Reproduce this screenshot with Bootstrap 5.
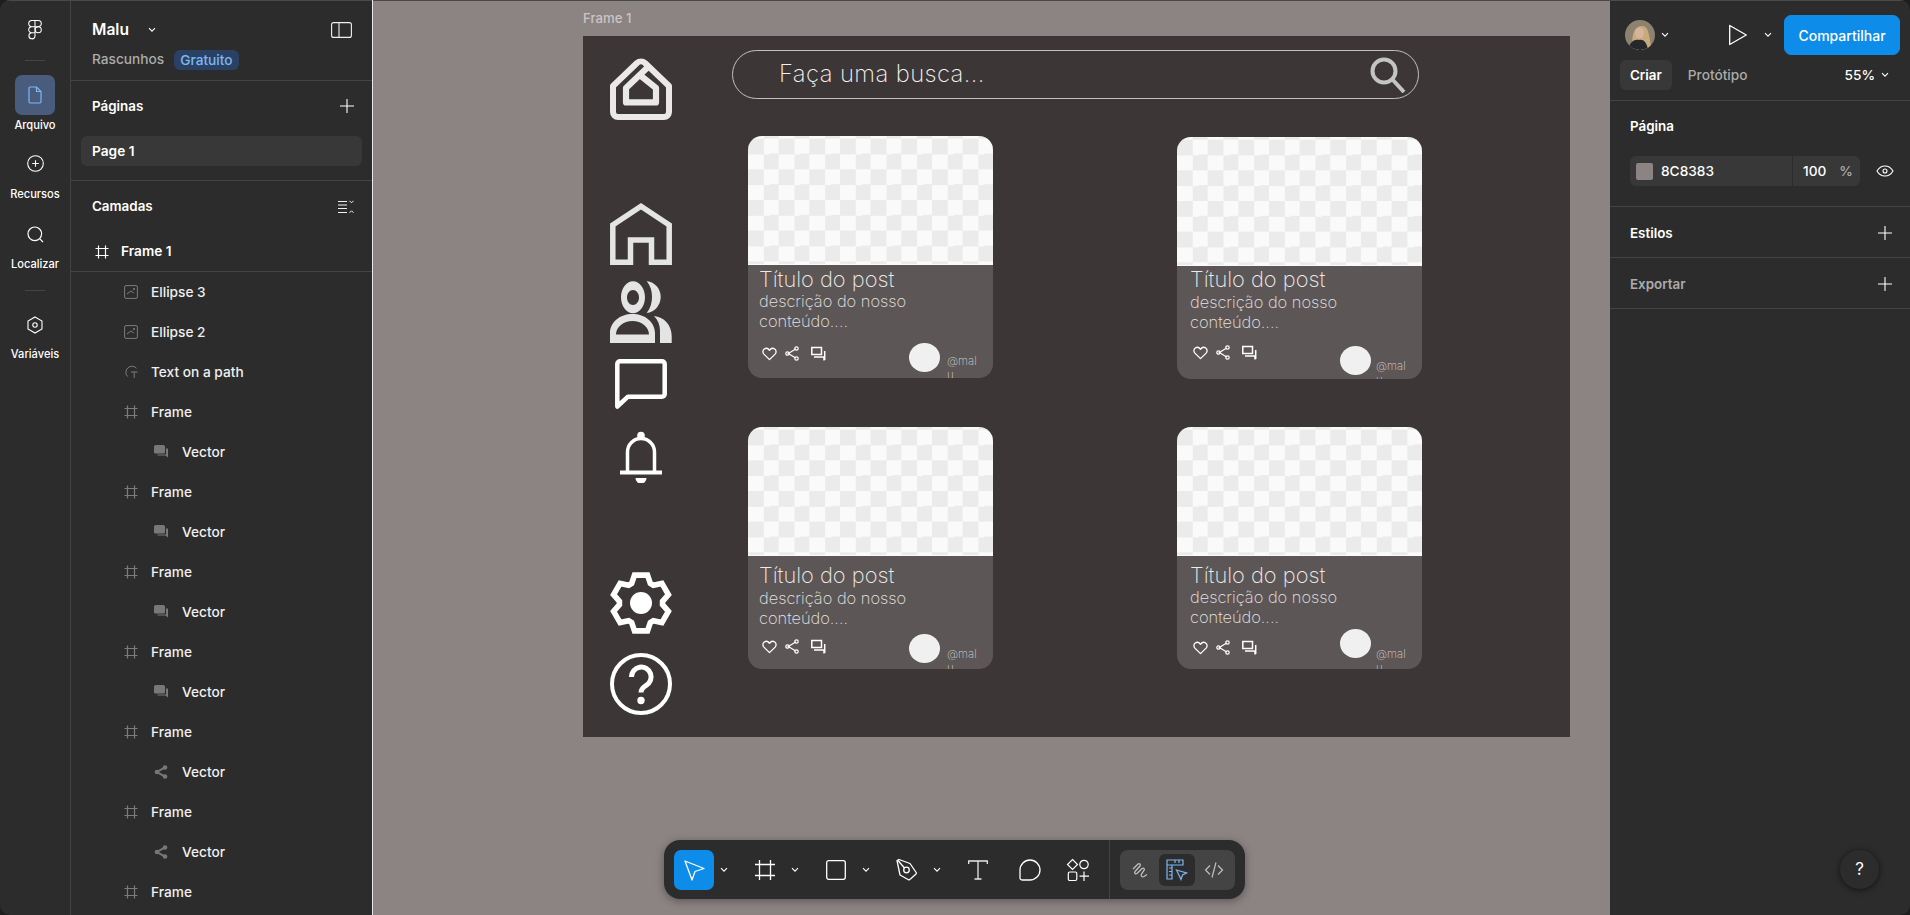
<!DOCTYPE html>
<html lang="pt-BR">
<head>
<meta charset="utf-8">
<title>Malu - Figma</title>
<link href="https://cdn.jsdelivr.net/npm/bootstrap@5.3.0/dist/css/bootstrap.min.css" rel="stylesheet">
<style>
html,body{height:100%;margin:0;overflow:hidden;background:#1e1e1e;font-family:Inter,"Liberation Sans",sans-serif;}
.fg-app{height:915px;width:1910px;border-radius:10px;overflow:hidden;color:#fff;font-weight:500;font-size:13.7px;line-height:1.2;}
.fg-app svg{display:block;flex:none;}
.fg-rail{width:71px;flex:none;background:#2c2c2c;border-right:1px solid #444;box-shadow:inset 0 1px 0 #4a4a4a;padding-top:20px;}
.fg-logo{height:20px;}
.fg-rule{width:20px;height:1px;background:#444;margin:19.5px 0 14px;}
.fg-rail-item{display:flex;flex-direction:column;align-items:center;width:100%;font-size:11.1px;color:#fff;}
.fg-rail-ic{width:40px;height:40px;border-radius:7px;display:flex;align-items:center;justify-content:center;}
.fg-rail-ic.is-on{background:#4a5c7e;}
.fg-rail-lbl{margin-top:4px;height:14px;}
.fg-res{margin-top:19px;}
.fg-res .fg-rail-lbl{margin-top:12px;}
.fg-res .fg-rail-ic,.fg-loc .fg-rail-ic{height:24px;}
.fg-loc{margin-top:21px;}
.fg-loc .fg-rail-lbl{margin-top:11px;}
.fg-rule2{margin:18px 0 14px;}
.fg-var .fg-rail-lbl{margin-top:3px;}
.fg-panel{width:302px;flex:none;background:#2c2c2c;border-right:1px solid #e8e8e8;box-shadow:inset 0 1px 0 #4a4a4a;overflow:hidden;}
.fg-head{height:81px;padding:21px 20px 0 21px;border-bottom:1px solid #444;}
.fg-name{font-size:15.6px;font-weight:600;}
.fg-head-line{height:20px;margin-top:10px;}
.fg-chev-m{margin-left:19px;}
.fg-muted{color:#ababab;}
.fg-free{background:#2b4164;color:#7cb7f2;border-radius:6px;padding:0 6px;height:20px;line-height:20px;margin-left:10px;}
.fg-sec{height:51px;padding:0 18px 0 21px;font-weight:600;font-size:13.4px;}
.fg-pages{height:100px;border-bottom:1px solid #444;}
.fg-page{margin:0 10px;height:30px;line-height:30px;padding-left:11px;background:#383838;border-radius:6px;font-weight:600;}
.fg-pages .fg-sec{height:50px;margin-bottom:5px;}
.fg-row{height:40px;display:flex;align-items:center;color:#f0f0f0;}
.fg-row.lv0{padding-left:24px;font-weight:600;border-bottom:1px solid #444;color:#fff;}
.fg-row.lv0 svg{margin-right:12px;}
.fg-row.lv1 svg{margin-left:53px;margin-right:13px;color:#7c7c7c;width:14px;height:14px;}
.fg-row.lv2{padding-left:83px;}
.fg-row.lv2 svg{margin-right:14px;color:#787878;width:14px;height:14px;}
.fg-canvas{flex:1 1 auto;position:relative;background:#8c8383;box-shadow:inset 0 1px 0 #4a4a4a;overflow:hidden;}
.fg-flabel{position:absolute;left:210px;top:11px;color:#c9c5c5;font-size:13.2px;}
.fg-frame{position:absolute;left:210px;top:36px;width:987px;height:701px;background:#3c3636;display:flex;}
.fg-icons{width:62px;margin-left:27px;flex:none;display:flex;flex-direction:column;align-items:center;}
.ic-a{margin-top:22px;}.ic-b{margin-top:83px;}.ic-c{margin-top:16px;}.ic-d{margin-top:16px;}.ic-e{margin-top:20px;}.ic-f{margin-top:89px;}.ic-g{margin-top:19px;}
.fg-main{margin-left:60px;}
.fg-search{margin-top:14px;width:687px;height:49px;border:1px solid #c4c0c0;border-radius:25px;padding:0 12px 0 46px;font-weight:200;font-size:23.8px;letter-spacing:.4px;color:#f4f2f2;}
.fg-grid{display:grid;grid-template-columns:245px 245px;column-gap:184px;row-gap:48px;margin:37px 0 0 16px;align-items:start;}
.fg-card{--t:0px;--d:0px;--a:0px;--h:12px;--i:3px;--x:11px;--m:7px;border:0;background:#5c5656;border-radius:14px;overflow:hidden;height:242px;--bs-card-bg:#5c5656;}
.fg-card.c2{--t:-1px;--d:1px;--a:2px;--h:16px;--i:1px;--x:13px;--m:5px;margin-top:1px;}
.fg-card.c3{--t:5px;--d:1px;--h:14px;--i:5px;}
.fg-card.c4{--t:5px;--a:-5px;--h:14px;--i:6px;--x:13px;--m:5px;}
.fg-check{height:129px;border-bottom:1px solid #fafafa;background:conic-gradient(#fafafa 25%,#ebebeb 0 50%,#fafafa 0 75%,#ebebeb 0) 0 2.67px/30.67px 30.67px;}
.fg-card-body{padding:0 11px 0 var(--x);}
.fg-ctitle{font-weight:200;font-size:21.8px;line-height:28px;color:#eceaea;margin-top:var(--t);}
.fg-cdesc{font-weight:200;font-size:16.4px;line-height:20px;margin-top:calc(var(--d) - 2px);color:#e6e4e4;}
.fg-cfoot{height:31px;margin-top:calc(12px - var(--t) - var(--d));}
.fg-cact{gap:8px;padding-left:3px;color:#fff;margin-top:var(--i);}
.fg-ava{width:31px;height:29px;border-radius:50%;background:#f1f0f0;margin-right:var(--m);margin-top:var(--a);}
.fg-handle{font-size:11.4px;font-weight:200;color:#d2cece;margin-top:var(--h);width:35px;}
.fg-tools{position:absolute;left:291px;top:840px;width:581px;height:59px;border-radius:16px;background:#2c2c2c;box-shadow:0 2px 8px rgba(0,0,0,.35);padding:10px 0 0 10px;}
.fg-tool{width:40px;height:40px;display:flex;align-items:center;justify-content:center;border-radius:7px;}
.fg-tool.is-on{background:#0d8ce9;}
.fg-tool.g12{margin-left:12px;}
.fg-tool.g8{margin-left:8px;}
.fg-chev{width:20px;height:40px;display:flex;align-items:center;justify-content:center;margin-right:11px;}
.fg-vsep{width:1px;height:59px;background:#444;margin:-10px 10px 0 11px;}
.fg-modes{width:115px;height:40px;background:#444;border-radius:8px;padding:4px 2px;gap:1px;}
.fg-mode{width:36px;height:32px;display:flex;align-items:center;justify-content:center;border-radius:6px;}
.fg-mode.is-on{background:#2c2c2c;}
.fg-right{width:300px;flex:none;background:#2c2c2c;position:relative;box-shadow:inset 0 1px 0 #4a4a4a;}
.fg-rtop{height:60px;padding:10px 10px 0 15px;}
.fg-chev-a{margin-left:6px;}
.fg-chev-b{margin:0 12px 0 16px;}
.fg-share{--bs-btn-bg:#0d8ce9;--bs-btn-hover-bg:#0d8ce9;--bs-btn-color:#fff;--bs-btn-border-color:#0d8ce9;width:116px;height:40px;padding:0;border-radius:7px;font-size:14px;font-weight:500;}
.fg-tabs{height:41px;padding:0 21px 10px 10px;border-bottom:1px solid #444;}
.fg-tab{padding:0 10px;height:30px;line-height:30px;border-radius:6px;font-weight:600;font-size:13.4px;}
.fg-tab.is-on{background:#383838;}
.fg-tab.off{color:#ababab;font-weight:500;margin-left:6px;font-size:13.7px;}
.fg-zoom svg{margin-left:6px;}
.fg-rsec{height:51px;padding:2px 18px 0 20px;font-weight:600;font-size:13.4px;border-bottom:1px solid #444;}
.fg-pg{height:106px;border-bottom:1px solid #444;padding:0 0 0 20px;font-weight:600;font-size:13.4px;}
.fg-pg-t{height:51px;margin-bottom:4px;}
.fg-field{width:230px;height:30px;background:#383838;border-radius:6px;font-weight:500;font-size:13.7px;}
.fg-sw{width:17px;height:17px;background:#8c8383;border-radius:2px;margin:0 8px 0 6px;}
.fg-hex{width:131px;}
.fg-pct{border-left:1px solid #2c2c2c;height:30px;padding-left:10px;line-height:30px;width:68px;}
.fg-pct span{color:#ababab;margin-left:13px;}
.fg-help{position:absolute;right:31px;bottom:26px;width:39px;height:39px;border-radius:50%;background:#2c2c2c;box-shadow:0 1px 6px rgba(0,0,0,.6);text-align:center;line-height:39px;font-size:17px;font-weight:400;}
.fg-dim{color:#ababab;}
</style>
</head>
<body>
<svg width="0" height="0" class="position-absolute">
<defs>
<symbol id="s-chev" viewBox="0 0 8 6"><path d="M1 1.200 4 4.200 7 1.200" fill="none" stroke="currentColor" stroke-width="1.100"/></symbol>
<symbol id="s-plus" viewBox="0 0 14 14"><path d="M7 0V14M0 7H14" fill="none" stroke="currentColor" stroke-width="1.100"/></symbol>
<symbol id="s-frame" viewBox="0 0 14 14"><path d="M3.500 .5V13.500M10.500 .5V13.500M.5 3.500H13.500M.5 10.500H13.500" fill="none" stroke="currentColor" stroke-width="1.200"/></symbol>
<symbol id="s-img" viewBox="0 0 14 14"><rect x=".6" y=".6" width="12.800" height="12.800" rx="1.500" fill="none" stroke="currentColor"/><path d="M3 9 7 6 10 8" fill="none" stroke="currentColor"/><circle cx="10" cy="4" r="1.100" fill="currentColor"/></symbol>
<symbol id="s-tpath" viewBox="0 0 14 14"><path d="M12.500 3.200A6 6 0 1 0 3.500 11.500" fill="none" stroke="currentColor"/><path d="M7 7H13.500M10.200 7V13" fill="none" stroke="currentColor"/></symbol>
<symbol id="s-chatf" viewBox="0 0 14 14"><path d="M0 1.500A1.500 1.500 0 0 1 1.500 0H9.500A1.500 1.500 0 0 1 11 1.500V7A1.500 1.500 0 0 1 9.500 8.500H1.500A1.500 1.500 0 0 1 0 7Z" fill="currentColor"/><path d="M12 3.500 14 3.500V12.500L11.500 10.500H3.500V9.500H12Z" fill="currentColor"/></symbol>
<symbol id="s-sharef" viewBox="0 0 14 14"><path d="M10.500 2.700 3 7 10.500 11.300" fill="none" stroke="currentColor" stroke-width="2"/><circle cx="11" cy="2.500" r="2.300" fill="currentColor"/><circle cx="3" cy="7" r="2.300" fill="currentColor"/><circle cx="11" cy="11.500" r="2.300" fill="currentColor"/></symbol>
<symbol id="s-heart" viewBox="0 0 16 15"><path d="M8 13.500 2 7.600C.4 5.900.7 3.400 2.400 2.200 4.200 1 6.600 1.500 8 3.500 9.400 1.500 11.800 1 13.600 2.200 15.300 3.400 15.600 5.900 14 7.600Z" fill="none" stroke="currentColor" stroke-width="1.400" stroke-linejoin="round"/></symbol>
<symbol id="s-share" viewBox="0 0 14 15"><path d="M10.700 3 3.300 7.500 10.700 12" fill="none" stroke="currentColor" stroke-width="1.200"/><circle cx="11.500" cy="2.500" r="1.700" fill="none" stroke="currentColor" stroke-width="1.200"/><circle cx="2.500" cy="7.500" r="1.700" fill="none" stroke="currentColor" stroke-width="1.200"/><circle cx="11.500" cy="12.500" r="1.700" fill="none" stroke="currentColor" stroke-width="1.200"/></symbol>
<symbol id="s-chat" viewBox="0 0 15 15"><path d="M.8 1.500H10.500V8.500H.8Z" fill="none" stroke="currentColor" stroke-width="1.500"/><path d="M3 11H13V14.500" fill="none" stroke="currentColor" stroke-width="1.500"/><path d="M13.700 5V14" fill="none" stroke="currentColor" stroke-width="1.500"/></symbol>
</defs>
</svg>

<div class="fg-app d-flex">
  <nav class="fg-rail d-flex flex-column align-items-center">
    <svg class="fg-logo" width="14" height="21" viewBox="0 0 14 21" fill="none" stroke="#fff" stroke-width="1.100"><path d="M7 .6H3.600A3.200 3.200 0 0 0 3.600 7H7ZM7 .6H10.400A3.200 3.200 0 0 1 10.400 7H7ZM7 7H3.600A3.200 3.200 0 0 0 3.600 13.400H7ZM7 13.400H3.600A3.200 3.200 0 1 0 7 16.800Z"/><circle cx="10.400" cy="10.200" r="3.200"/></svg>
    <div class="fg-rule"></div>
    <div class="fg-rail-item">
      <div class="fg-rail-ic is-on"><svg width="14" height="18" viewBox="0 0 14 18" fill="none" stroke="#7cb7f2" stroke-width="1.200"><path d="M1 2.200A1.200 1.200 0 0 1 2.200 1H8.500L13 5.500V15.800A1.200 1.200 0 0 1 11.800 17H2.200A1.200 1.200 0 0 1 1 15.800Z"/><path d="M8.500 1V5.500H13"/></svg></div>
      <div class="fg-rail-lbl">Arquivo</div>
    </div>
    <div class="fg-rail-item fg-res">
      <div class="fg-rail-ic"><svg width="17" height="17" viewBox="0 0 17 17" fill="none" stroke="#fff" stroke-width="1.100"><circle cx="8.500" cy="8.500" r="7.800"/><path d="M8.500 5.200V11.800M5.200 8.500H11.800"/></svg></div>
      <div class="fg-rail-lbl">Recursos</div>
    </div>
    <div class="fg-rail-item fg-loc">
      <div class="fg-rail-ic"><svg width="17" height="17" viewBox="0 0 17 17" fill="none" stroke="#fff" stroke-width="1.200"><circle cx="7.800" cy="7.800" r="6.800"/><path d="M12.800 12.800 16 16"/></svg></div>
      <div class="fg-rail-lbl">Localizar</div>
    </div>
    <div class="fg-rule fg-rule2"></div>
    <div class="fg-rail-item fg-var">
      <div class="fg-rail-ic"><svg width="16" height="18" viewBox="0 0 16 18" fill="none" stroke="#fff" stroke-width="1.100"><path d="M8 1 15 5V13L8 17 1 13V5Z"/><circle cx="8" cy="9" r="2.200"/></svg></div>
      <div class="fg-rail-lbl">Variáveis</div>
    </div>
  </nav>

  <aside class="fg-panel">
    <div class="fg-head">
      <div class="d-flex align-items-center justify-content-between">
        <div class="d-flex align-items-center"><span class="fg-name">Malu</span><svg class="fg-chev-m" width="8" height="6"><use href="#s-chev"/></svg></div>
        <svg width="21" height="16" viewBox="0 0 21 16" fill="none" stroke="#f0f0f0" stroke-width="1.100"><rect x=".6" y=".6" width="19.800" height="14.800" rx="2"/><path d="M8 .6V15.400"/></svg>
      </div>
      <div class="fg-head-line d-flex align-items-center"><span class="fg-muted">Rascunhos</span><span class="fg-free">Gratuito</span></div>
    </div>
    <div class="fg-pages">
      <div class="fg-sec d-flex align-items-center justify-content-between"><span>Páginas</span><svg width="14" height="14"><use href="#s-plus"/></svg></div>
      <div class="fg-page">Page 1</div>
    </div>
    <div class="fg-sec d-flex align-items-center justify-content-between"><span>Camadas</span><svg width="16" height="14" viewBox="0 0 16 14" fill="none" stroke="#f0f0f0" stroke-width="1"><path d="M0 1.500H9M0 5H9M0 8.500H9M0 12.500H9M11.500 .8 13.500 2.800 15.500 .8M11.500 12.800 13.500 10.800 15.500 12.800"/></svg></div>
    <div class="fg-layers">
      <div class="fg-row lv0"><svg width="14" height="14"><use href="#s-frame"/></svg>Frame 1</div>
      <div class="fg-row lv1"><svg><use href="#s-img"/></svg>Ellipse 3</div>
      <div class="fg-row lv1"><svg><use href="#s-img"/></svg>Ellipse 2</div>
      <div class="fg-row lv1"><svg><use href="#s-tpath"/></svg>Text on a path</div>
      <div class="fg-row lv1"><svg><use href="#s-frame"/></svg>Frame</div>
      <div class="fg-row lv2"><svg><use href="#s-chatf"/></svg>Vector</div>
      <div class="fg-row lv1"><svg><use href="#s-frame"/></svg>Frame</div>
      <div class="fg-row lv2"><svg><use href="#s-chatf"/></svg>Vector</div>
      <div class="fg-row lv1"><svg><use href="#s-frame"/></svg>Frame</div>
      <div class="fg-row lv2"><svg><use href="#s-chatf"/></svg>Vector</div>
      <div class="fg-row lv1"><svg><use href="#s-frame"/></svg>Frame</div>
      <div class="fg-row lv2"><svg><use href="#s-chatf"/></svg>Vector</div>
      <div class="fg-row lv1"><svg><use href="#s-frame"/></svg>Frame</div>
      <div class="fg-row lv2"><svg><use href="#s-sharef"/></svg>Vector</div>
      <div class="fg-row lv1"><svg><use href="#s-frame"/></svg>Frame</div>
      <div class="fg-row lv2"><svg><use href="#s-sharef"/></svg>Vector</div>
      <div class="fg-row lv1"><svg><use href="#s-frame"/></svg>Frame</div>
    </div>
  </aside>

  <main class="fg-canvas">
    <div class="fg-flabel">Frame 1</div>
    <section class="fg-frame">
      <div class="fg-icons">
        <svg class="ic-a" width="62" height="62" viewBox="0 0 62 62" fill="none" stroke="#ebe8e8" stroke-width="6" stroke-linejoin="round"><path d="M3 28V54A5 5 0 0 0 8 59H54A5 5 0 0 0 59 54V28L35 5A6 6 0 0 0 27 5Z"/><path d="M38 9 16 30V44.400H46V30L31 18" stroke-width="6.200"/></svg>
        <svg class="ic-b" width="62" height="62" viewBox="0 0 62 62" fill="none" stroke="#e4e4e4" stroke-width="5.500"><path d="M2.800 59.300V22L31 3.300 59.200 22V59.300H41.500V37H20.500V59.300Z"/></svg>
        <svg class="ic-c" width="62" height="62" viewBox="0 0 62 62" fill="#e4e4e4"><path fill-rule="evenodd" d="M23 .3C29.600.3 35 7.500 35 16.300S29.600 32.300 23 32.300 11 25.100 11 16.300 16.400.3 23 .3ZM23 9C19.700 9 17 12.300 17 16.500S19.700 24 23 24 29 20.700 29 16.500 26.300 9 23 9Z"/><path d="M36.700 0C45 1 50.700 8 50.700 15.700 50.700 24 45 31 36.700 32 40.500 27 42 21.500 42 15.700 42 10 40.500 5 36.700 0Z"/><path fill-rule="evenodd" d="M0 62V52C0 41 10 33 22.500 33S45 41 45 52V62ZM6 53.500H39C39 46 31.500 40 22.500 40S6 46 6 53.500Z"/><path d="M44 35C54 36 61.700 44 61.700 55V62H50V50C50 44 48 39 44 35Z"/></svg>
        <svg class="ic-d" width="52" height="52" viewBox="0 0 52 52" fill="none" stroke="#fff" stroke-width="4.500" stroke-linejoin="round"><path d="M2.300 47.500V5A2.700 2.700 0 0 1 5 2.300H47A2.700 2.700 0 0 1 49.700 5V35A2.700 2.700 0 0 1 47 37.700H13Z"/></svg>
        <svg class="ic-e" width="42" height="52" viewBox="0 0 42 52" fill="none" stroke="#fff"><circle cx="21" cy="4.500" r="3.800" fill="#fff" stroke="none"/><path d="M7.500 41V21A13.500 13.500 0 0 1 34.500 21V41" stroke-width="3.500"/><path d="M0 41.500H42" stroke-width="4"/><path d="M15.500 47H26.500A5.500 5.500 0 0 1 15.500 47Z" fill="#fff" stroke="none"/></svg>
        <svg class="ic-f" width="62" height="62" viewBox="0 0 62 62"><g transform="translate(31 31) scale(.93)"><polygon points="-10,-21 -7,-30 7,-30 10,-21 13.190,-19.160 22.480,-21.060 29.480,-8.940 23.190,-1.840 23.190,1.840 29.480,8.940 22.480,21.060 13.190,19.160 10,21 7,30 -7,30 -10,21 -13.190,19.160 -22.480,21.060 -29.480,8.940 -23.190,1.840 -23.190,-1.840 -29.480,-8.940 -22.480,-21.060 -13.190,-19.160" fill="none" stroke="#fff" stroke-width="6" stroke-linejoin="miter"/></g><circle cx="31" cy="31" r="11" fill="#fff"/></svg>
        <svg class="ic-g" width="62" height="62" viewBox="0 0 62 62" fill="none" stroke="#fff" stroke-width="4"><circle cx="31" cy="31" r="29"/><path d="M21.500 24A9.800 9.800 0 1 1 36 32.500C33 34.500 31 36 31 39.500" stroke-width="5"/><circle cx="31" cy="47.500" r="3.700" fill="#fff" stroke="none"/></svg>
      </div>
      <div class="fg-main">
        <div class="fg-search d-flex align-items-center justify-content-between"><span>Faça uma busca...</span><svg width="36" height="36" viewBox="0 0 36 36" fill="none" stroke="#c4c4c4" stroke-width="4"><circle cx="14" cy="14" r="11.500"/><path d="M22 22 34 35"/></svg></div>
        <div class="fg-grid">
          <article class="card fg-card"><div class="fg-check"></div><div class="fg-card-body"><div class="fg-ctitle">Título do post</div><div class="fg-cdesc">descrição do nosso<br>conteúdo....</div><div class="fg-cfoot d-flex justify-content-between"><div class="fg-cact d-flex align-items-center align-self-start"><svg width="15" height="14"><use href="#s-heart"/></svg><svg width="14" height="15"><use href="#s-share"/></svg><svg class="ms-1" width="15" height="15"><use href="#s-chat"/></svg></div><div class="d-flex"><div class="fg-ava"></div><div class="fg-handle">@malu</div></div></div></div></article>
          <article class="card fg-card c2"><div class="fg-check"></div><div class="fg-card-body"><div class="fg-ctitle">Título do post</div><div class="fg-cdesc">descrição do nosso<br>conteúdo....</div><div class="fg-cfoot d-flex justify-content-between"><div class="fg-cact d-flex align-items-center align-self-start"><svg width="15" height="14"><use href="#s-heart"/></svg><svg width="14" height="15"><use href="#s-share"/></svg><svg class="ms-1" width="15" height="15"><use href="#s-chat"/></svg></div><div class="d-flex"><div class="fg-ava"></div><div class="fg-handle">@malu</div></div></div></div></article>
          <article class="card fg-card c3"><div class="fg-check"></div><div class="fg-card-body"><div class="fg-ctitle">Título do post</div><div class="fg-cdesc">descrição do nosso<br>conteúdo....</div><div class="fg-cfoot d-flex justify-content-between"><div class="fg-cact d-flex align-items-center align-self-start"><svg width="15" height="14"><use href="#s-heart"/></svg><svg width="14" height="15"><use href="#s-share"/></svg><svg class="ms-1" width="15" height="15"><use href="#s-chat"/></svg></div><div class="d-flex"><div class="fg-ava"></div><div class="fg-handle">@malu</div></div></div></div></article>
          <article class="card fg-card c4"><div class="fg-check"></div><div class="fg-card-body"><div class="fg-ctitle">Título do post</div><div class="fg-cdesc">descrição do nosso<br>conteúdo....</div><div class="fg-cfoot d-flex justify-content-between"><div class="fg-cact d-flex align-items-center align-self-start"><svg width="15" height="14"><use href="#s-heart"/></svg><svg width="14" height="15"><use href="#s-share"/></svg><svg class="ms-1" width="15" height="15"><use href="#s-chat"/></svg></div><div class="d-flex"><div class="fg-ava"></div><div class="fg-handle">@malu</div></div></div></div></article>
        </div>
      </div>
    </section>

    <div class="fg-tools d-flex">
      <div class="fg-tool is-on"><svg width="24" height="24" viewBox="0 0 24 24" fill="none" stroke="#fff" stroke-width="1.300" stroke-linejoin="round"><path d="M3 3 22 10.500 13 13.500 10 22Z"/></svg></div>
      <div class="fg-chev"><svg width="8" height="6"><use href="#s-chev"/></svg></div>
      <div class="fg-tool"><svg width="22" height="22" viewBox="0 0 22 22" fill="none" stroke="#fff" stroke-width="1.300"><path d="M5.500 1V21M16.500 1V21M1 5.500H21M1 16.500H21"/></svg></div>
      <div class="fg-chev"><svg width="8" height="6"><use href="#s-chev"/></svg></div>
      <div class="fg-tool"><svg width="20" height="20" viewBox="0 0 20 20" fill="none" stroke="#fff" stroke-width="1.300"><rect x=".7" y=".7" width="18.600" height="18.600" rx="2"/></svg></div>
      <div class="fg-chev"><svg width="8" height="6"><use href="#s-chev"/></svg></div>
      <div class="fg-tool"><svg width="24" height="24" viewBox="0 0 24 24" fill="none" stroke="#fff" stroke-width="1.300" stroke-linejoin="round"><path d="M2 2.500 4 1.500 15 5.500 21.500 15 21 16 16 20.500 14 22 13 21.500 5 17Z"/><circle cx="11.500" cy="12" r="2.800"/><path d="M3 2.500 9.500 10"/></svg></div>
      <div class="fg-chev"><svg width="8" height="6"><use href="#s-chev"/></svg></div>
      <div class="fg-tool"><svg width="20" height="20" viewBox="0 0 20 20" fill="none" stroke="#e8e8e8" stroke-width="1.300"><path d="M.7 4V1H19.300V4M10 1V19M6.500 19H13.500"/></svg></div>
      <div class="fg-tool g12"><svg width="22" height="22" viewBox="0 0 22 22" fill="none" stroke="#fff" stroke-width="1.300"><path d="M11 1A10 10 0 0 1 21 11 10 10 0 0 1 11 21H3A2 2 0 0 1 1 19V11A10 10 0 0 1 11 1Z"/></svg></div>
      <div class="fg-tool g8"><svg width="24" height="24" viewBox="0 0 24 24" fill="none" stroke="#fff" stroke-width="1.200"><path d="M6.500 1.500 11.500 6.500 6.500 11.500 1.500 6.500Z"/><circle cx="18" cy="6.500" r="4.200"/><rect x="2.300" y="14" width="8.500" height="8.500" rx="1.500"/><path d="M18 13.500V23M13.500 18.200H23"/></svg></div>
      <div class="fg-vsep"></div>
      <div class="fg-modes d-flex">
        <div class="fg-mode"><svg width="19" height="19" viewBox="0 0 19 19" fill="none" stroke="#c0c0c0" stroke-width="1.300"><path d="M2 8 7 3C8.500 2 10 3.500 9 5L4 10.500C3 12 4.500 13.500 6 12.500L11 7.500C12.500 6.500 14 8 13 9.500L10.500 13C9.500 15 11 16.500 13 15.500L16 13.500"/></svg></div>
        <div class="fg-mode is-on"><svg width="22" height="22" viewBox="0 0 22 22" fill="none" stroke="#7cb7f2" stroke-width="1.200"><path d="M1 1H17V6H6V20H1ZM1 6H6M3 9H6M3 12.500H6M3 16H6M9 1V4M13 1V4"/><path d="M10.500 11 20.500 14 16.500 16 15 20.500Z"/></svg></div>
        <div class="fg-mode"><svg width="20" height="18" viewBox="0 0 20 18" fill="none" stroke="#c0c0c0" stroke-width="1.200"><path d="M6 4.500 1.500 9 6 13.500M14 4.500 18.500 9 14 13.500M12 1.500 8 16.500"/></svg></div>
      </div>
    </div>
  </main>

  <aside class="fg-right">
    <div class="fg-rtop d-flex align-items-center">
      <svg width="30" height="30" viewBox="0 0 30 30"><defs><clipPath id="avc"><circle cx="15" cy="15" r="15"/></clipPath></defs><g clip-path="url(#avc)"><rect width="30" height="30" fill="#8d8270"/><path d="M8 30C6 18 8 6 17 6 25 6 24 20 27 30Z" fill="#c9aa7c"/><ellipse cx="14.500" cy="13" rx="4.500" ry="5.500" fill="#d8b59a"/><path d="M3 30C5 21 10 19 14 20 18 19 22 22 23 30Z" fill="#26272a"/></g></svg>
      <svg class="fg-chev-a" width="8" height="6"><use href="#s-chev"/></svg>
      <svg class="ms-auto" width="20" height="22" viewBox="0 0 20 22" fill="none" stroke="#fff" stroke-width="1.300" stroke-linejoin="round"><path d="M1.700 1.500 18.300 11 1.700 20.500Z"/></svg>
      <svg class="fg-chev-b" width="8" height="6"><use href="#s-chev"/></svg>
      <button class="btn fg-share" type="button">Compartilhar</button>
    </div>
    <div class="fg-tabs d-flex align-items-center">
      <div class="fg-tab is-on">Criar</div><div class="fg-tab off">Protótipo</div>
      <div class="fg-zoom ms-auto d-flex align-items-center">55%<svg width="8" height="6"><use href="#s-chev"/></svg></div>
    </div>
    <div class="fg-pg">
      <div class="fg-pg-t d-flex align-items-center">Página</div>
      <div class="d-flex align-items-center justify-content-between">
        <div class="fg-field d-flex align-items-center"><div class="fg-sw"></div><div class="fg-hex">8C8383</div><div class="fg-pct">100<span>%</span></div></div>
        <svg class="me-3" width="18" height="12" viewBox="0 0 18 12" fill="none" stroke="#fff" stroke-width="1.100"><path d="M1 6C3 2.500 6 1 9 1S15 2.500 17 6C15 9.500 12 11 9 11S3 9.500 1 6Z"/><circle cx="9" cy="6" r="2"/></svg>
      </div>
    </div>
    <div class="fg-rsec d-flex align-items-center justify-content-between"><span>Estilos</span><svg width="14" height="14"><use href="#s-plus"/></svg></div>
    <div class="fg-rsec d-flex align-items-center justify-content-between"><span class="fg-dim">Exportar</span><svg width="14" height="14"><use href="#s-plus"/></svg></div>
    <div class="fg-help">?</div>
  </aside>
</div>
<script src="https://cdn.jsdelivr.net/npm/bootstrap@5.3.0/dist/js/bootstrap.bundle.min.js"></script>
</body>
</html>
